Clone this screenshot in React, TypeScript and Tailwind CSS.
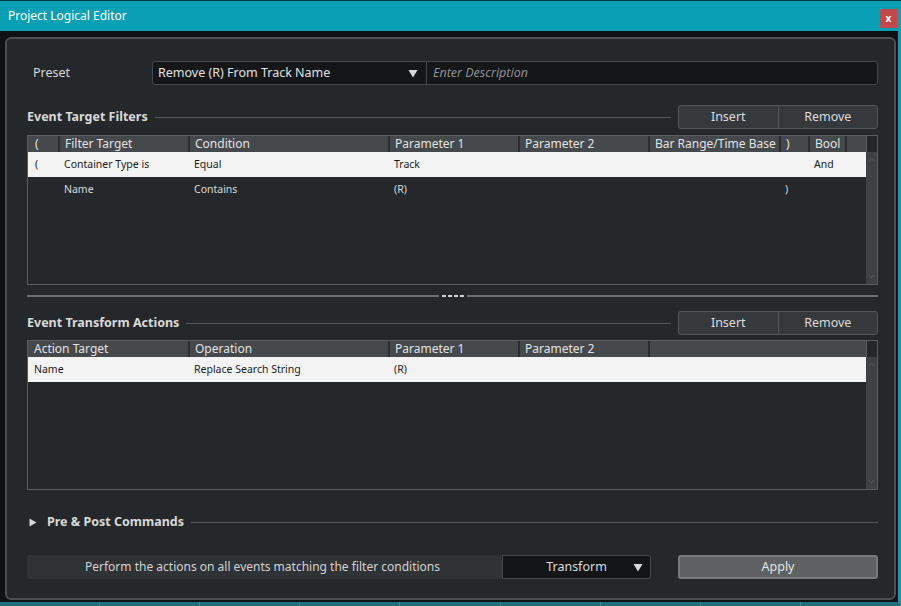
import { ChevronDown, ChevronUp } from "lucide-react";

const FONT = "font-['Noto_Sans','Liberation_Sans',sans-serif]";

type Col = { label: string; width: string };

const filterCols: Col[] = [
  { label: "(", width: "w-[30px]" },
  { label: "Filter Target", width: "w-[130px]" },
  { label: "Condition", width: "w-[200px]" },
  { label: "Parameter 1", width: "w-[130px]" },
  { label: "Parameter 2", width: "w-[130px]" },
  { label: "Bar Range/Time Base", width: "w-[131px]" },
  { label: ")", width: "w-[29px]" },
  { label: "Bool", width: "w-[37px]" },
  { label: "", width: "flex-1" },
];

const actionCols: Col[] = [
  { label: "Action Target", width: "w-[160px]" },
  { label: "Operation", width: "w-[200px]" },
  { label: "Parameter 1", width: "w-[130px]" },
  { label: "Parameter 2", width: "w-[130px]" },
  { label: "", width: "flex-1" },
];

const filterRows = [
  ["(", "Container Type is", "Equal", "Track", "", "", "", "And", ""],
  ["", "Name", "Contains", "(R)", "", "", ")", "", ""],
];

const actionRows = [["Name", "Replace Search String", "(R)", "", ""]];

function Caret() {
  return (
    <svg width="10" height="9" viewBox="0 0 10 9" className="block">
      <path d="M0.5 1 L9.5 1 L5 8.5 Z" fill="#d8d8d8" />
    </svg>
  );
}

function SectionHeader({ title }: { title: string }) {
  return (
    <div className="flex h-[24px] items-center">
      <span className="text-[12.5px] font-bold text-[#d9d9d9]">{title}</span>
      <div className="mx-[7px] h-px flex-1 bg-[#55585b]" />
      <div className="flex h-full w-[200px] overflow-hidden rounded-[3px] border border-[#54575a] bg-[#36393c] text-[12.5px] text-[#dcdcdc]">
        <button className="flex-1 border-r border-[#54575a]">Insert</button>
        <button className="flex-1">Remove</button>
      </div>
    </div>
  );
}

function Table({
  cols,
  rows,
  firstPad,
}: {
  cols: Col[];
  rows: string[][];
  firstPad: string;
}) {
  return (
    <div className="flex h-[150px] border border-[#5b5e61] bg-[#25282b]">
      <div className="flex min-w-0 flex-1 flex-col">
        <div className="flex h-[16px] bg-[#45494c] text-[12px] leading-[16px] text-[#e2e2e2]">
          {cols.map((c, i) => (
            <div
              key={i}
              className={`${c.width} overflow-hidden whitespace-nowrap ${
                i === 0 ? firstPad : "border-l-2 border-[#2b2e31] pl-[5px]"
              }`}
            >
              {c.label}
            </div>
          ))}
        </div>
        {rows.map((r, ri) => (
          <div
            key={ri}
            className={`flex h-[25px] items-center text-[10.5px] ${
              ri === 0 ? "bg-[#f3f3f3] text-[#1c1c1c]" : "text-[#d8d8d8]"
            }`}
          >
            {r.map((v, i) => (
              <div
                key={i}
                className={`${cols[i].width} overflow-hidden whitespace-nowrap ${
                  i === 0 ? firstPad : "pl-[6px]"
                }`}
              >
                {v}
              </div>
            ))}
          </div>
        ))}
      </div>
      <div className="flex w-[11px] flex-col">
        <div className="h-[16px] border-l border-[#5b5e61] bg-[#25282b]" />
        <div className="flex flex-1 flex-col items-center justify-between bg-[#3f4245] py-[3px] text-[#60646a]">
          <ChevronUp size={9} strokeWidth={2} />
          <ChevronDown size={9} strokeWidth={2} />
        </div>
      </div>
    </div>
  );
}

export default function App() {
  return (
    <div className={`flex h-[606px] w-[901px] flex-col bg-[#0f1112] ${FONT}`}>
      <div className="flex h-[33px] items-center border-t border-[#0b3a40] bg-[#09a0b5] pl-[8px] pr-[4px]">
        <span className="flex-1 text-[12px] text-white">Project Logical Editor</span>
        <div className="mt-[4px] flex h-[19px] w-[17px] items-center justify-center bg-[#c4474b] text-[10px] font-bold leading-none text-white">
          x
        </div>
      </div>

      <div className="flex flex-1">
        <div className="flex flex-1 pb-[2px] pl-[5px] pr-[2px] pt-[6px]">
          <div className="flex flex-1 flex-col rounded-[6px] border-2 border-[#4c4f52] bg-[#25282b] pb-[19px] pl-[20px] pr-[16px] pt-[22px]">
            <div className="flex h-[24px] items-center">
              <span className="w-[125px] pl-[6px] text-[12.5px] text-[#d6d6d6]">Preset</span>
              <div className="flex h-full flex-1 overflow-hidden rounded-[3px] border border-[#46494c] bg-[#141618]">
                <div className="flex w-[274px] items-center justify-between border-r border-[#46494c] pl-[5px] pr-[8px]">
                  <span className="text-[12.5px] text-[#e2e2e2]">Remove (R) From Track Name</span>
                  <Caret />
                </div>
                <div className="flex flex-1 items-center pl-[6px] text-[12.5px] italic text-[#8d8f92]">
                  Enter Description
                </div>
              </div>
            </div>

            <div className="mt-[20px]">
              <SectionHeader title="Event Target Filters" />
            </div>
            <div className="mt-[6px]">
              <Table cols={filterCols} rows={filterRows} firstPad="pl-[7px]" />
            </div>

            <div className="mt-[10px] flex h-[2px] items-center gap-[3px]">
              <div className="h-[2px] flex-1 bg-[#6b6e71]" />
              <div className="flex gap-[2px]">
                <div className="h-[2px] w-[4px] bg-[#d0d0d0]" />
                <div className="h-[2px] w-[4px] bg-[#d0d0d0]" />
                <div className="h-[2px] w-[4px] bg-[#d0d0d0]" />
                <div className="h-[2px] w-[4px] bg-[#d0d0d0]" />
              </div>
              <div className="h-[2px] flex-1 bg-[#6b6e71]" />
            </div>

            <div className="mt-[14px]">
              <SectionHeader title="Event Transform Actions" />
            </div>
            <div className="mt-[5px]">
              <Table cols={actionCols} rows={actionRows} firstPad="pl-[6px]" />
            </div>

            <div className="mt-[22px] flex h-[20px] items-center">
              <svg width="8" height="9" viewBox="0 0 8 9" className="ml-[2px] mr-[10px] block">
                <path d="M0.5 0.5 L7.5 4.5 L0.5 8.5 Z" fill="#d6d6d6" />
              </svg>
              <span className="text-[12.5px] font-bold text-[#d9d9d9]">Pre &amp; Post Commands</span>
              <div className="ml-[7px] h-px flex-1 bg-[#55585b]" />
            </div>

            <div className="mt-[23px] flex h-[24px]">
              <div className="flex w-[475px] items-center overflow-hidden rounded-l-[3px] bg-[#303336]">
                <span className="pl-[58px] text-[12px] text-[#d2d2d2]">
                  Perform the actions on all events matching the filter conditions
                </span>
              </div>
              <div className="relative flex w-[149px] items-center justify-center rounded-r-[3px] border border-[#46494c] bg-[#131517]">
                <span className="text-[12.5px] text-[#dcdcdc]">Transform</span>
                <span className="absolute right-[7px]">
                  <Caret />
                </span>
              </div>
              <div className="flex-1" />
              <button className="w-[200px] rounded-[3px] border-2 border-[#77797b] bg-[#5f6163] text-[12.5px] text-[#e4e4e4]">
                Apply
              </button>
            </div>
          </div>
        </div>
        <div className="w-[3px] bg-[#09a0b5]" />
      </div>
      <div className="flex h-[4px] bg-[#1f6f7a]">
        {Array.from({ length: 9 }).map((_, i) => (
          <div key={i} className="w-[107px] border-r border-[#3d8a95]" />
        ))}
      </div>
    </div>
  );
}
